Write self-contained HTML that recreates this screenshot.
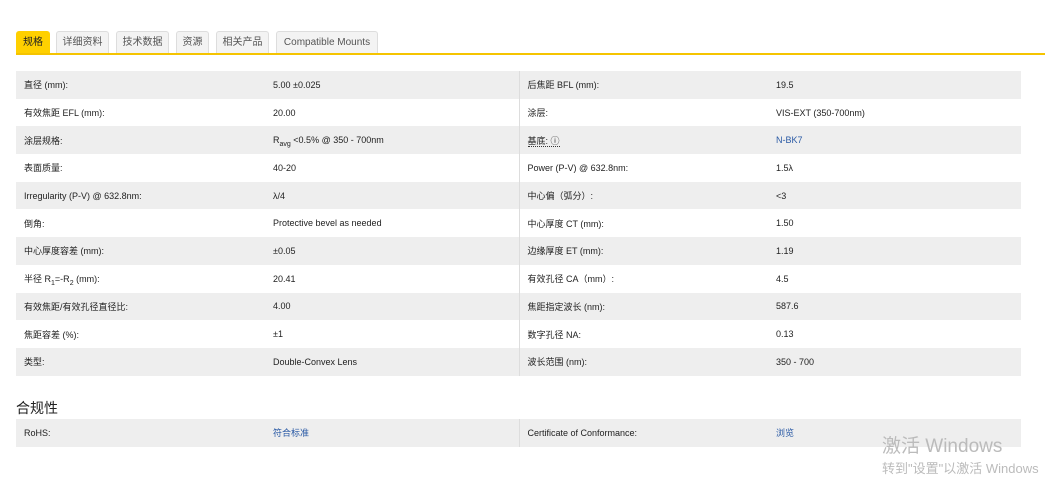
<!DOCTYPE html>
<html><head><meta charset="utf-8"><style>
body{margin:0;background:#fff;font-family:"Liberation Sans","Noto Sans CJK SC",sans-serif;color:#222;width:1045px;height:473px;overflow:hidden;position:relative}
.tabs{position:absolute;left:16px;top:31px;height:23px}
.tab{position:absolute;top:0;height:22px;border:1px solid #ddd;border-bottom:none;background:#f3f3f3;color:#555;font-size:10px;line-height:22px;text-align:center;border-radius:3px 3px 0 0;box-sizing:border-box}
.tab.a{background:#ffd000;border-color:#ffd000;color:#222}
.line{position:absolute;left:16px;right:0;top:53px;height:2px;background:#f5c400}
table{position:absolute;left:16px;width:1005px;border-collapse:collapse;font-size:9px}
td{height:27.7px;padding:0 0 0 8px;vertical-align:middle}
tr:nth-child(odd) td{background:#eee}
td.c3{border-left:1px solid #ddd}
a{color:#2a5aa5;text-decoration:none}
h3{position:absolute;left:16px;top:398px;margin:0;font-size:14px;font-weight:normal}
.wm{position:absolute;left:882px;top:431px;color:#bbb;font-size:19px;white-space:nowrap}
.wm2{position:absolute;left:882px;top:458px;color:#bbb;font-size:13px;white-space:nowrap}
sub{font-size:7px;line-height:0}
</style></head><body>
<div class="tabs">
<div class="tab a" style="left:0;width:34px">规格</div>
<div class="tab" style="left:40px;width:53px">详细资料</div>
<div class="tab" style="left:100px;width:53px">技术数据</div>
<div class="tab" style="left:160px;width:33px">资源</div>
<div class="tab" style="left:200px;width:53px">相关产品</div>
<div class="tab" style="left:260px;width:102px">Compatible Mounts</div>
</div>
<div class="line"></div>
<table style="top:71px">
<colgroup><col style="width:249px"><col style="width:254px"><col style="width:249px"><col></colgroup>
<tr><td>直径 (mm):</td><td>5.00 ±0.025</td><td class="c3">后焦距 BFL (mm):</td><td>19.5</td></tr>
<tr><td>有效焦距 EFL (mm):</td><td>20.00</td><td class="c3">涂层:</td><td>VIS-EXT (350-700nm)</td></tr>
<tr><td>涂层规格:</td><td>R<sub>avg</sub> &lt;0.5% @ 350 - 700nm</td><td class="c3"><span style="border-bottom:1px dotted #333">基底: ⓘ</span></td><td><a>N-BK7</a></td></tr>
<tr><td>表面质量:</td><td>40-20</td><td class="c3">Power (P-V) @ 632.8nm:</td><td>1.5λ</td></tr>
<tr><td>Irregularity (P-V) @ 632.8nm:</td><td>λ/4</td><td class="c3">中心偏（弧分）:</td><td>&lt;3</td></tr>
<tr><td>倒角:</td><td>Protective bevel as needed</td><td class="c3">中心厚度 CT (mm):</td><td>1.50</td></tr>
<tr><td>中心厚度容差 (mm):</td><td>±0.05</td><td class="c3">边缘厚度 ET (mm):</td><td>1.19</td></tr>
<tr><td>半径 R<sub>1</sub>=-R<sub>2</sub> (mm):</td><td>20.41</td><td class="c3">有效孔径 CA（mm）:</td><td>4.5</td></tr>
<tr><td>有效焦距/有效孔径直径比:</td><td>4.00</td><td class="c3">焦距指定波长 (nm):</td><td>587.6</td></tr>
<tr><td>焦距容差 (%):</td><td>±1</td><td class="c3">数字孔径 NA:</td><td>0.13</td></tr>
<tr><td>类型:</td><td>Double-Convex Lens</td><td class="c3">波长范围 (nm):</td><td>350 - 700</td></tr>
</table>
<h3>合规性</h3>
<table style="top:419px">
<colgroup><col style="width:249px"><col style="width:254px"><col style="width:249px"><col></colgroup>
<tr><td>RoHS:</td><td><a>符合标准</a></td><td class="c3">Certificate of Conformance:</td><td><a>浏览</a></td></tr>
</table>
<div class="wm">激活 Windows</div>
<div class="wm2">转到"设置"以激活 Windows</div>
</body></html>
